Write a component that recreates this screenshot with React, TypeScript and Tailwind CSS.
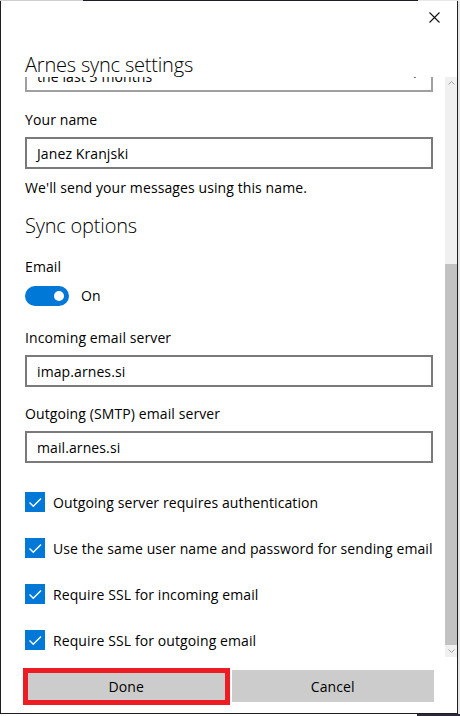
import React from "react";

const font = "font-['Open_Sans','Noto_Sans',sans-serif]";
const body = "text-[14px] tracking-[0.1px] text-black";

function Field({ label, value }: { label: string; value: string }) {
  return (
    <>
      <div className={`${body} leading-[22px]`}>{label}</div>
      <div className={`mt-[6px] h-8 border-2 border-[#7a7a7a] flex items-center pl-[10px] ${body}`}>
        {value}
      </div>
    </>
  );
}

function Check({ label, first }: { label: string; first?: boolean }) {
  return (
    <div className={`flex items-start h-5 ${first ? "mt-[29px]" : "mt-[26px]"}`}>
      <div className="w-5 h-5 bg-[#0078d7] flex items-center justify-center shrink-0">
        <svg width="20" height="20" viewBox="0 0 20 20" fill="none">
          <path d="M4.5 10.5 L8.3 14.3 L16 6.5" stroke="white" strokeWidth="1.4" />
        </svg>
      </div>
      <span className={`ml-2 leading-[22px] whitespace-nowrap ${body}`}>{label}</span>
    </div>
  );
}

export default function App() {
  return (
    <div className={`w-[460px] h-[716px] overflow-hidden bg-[#e8e8e8] flex flex-col ${font}`}>
      {/* strip of desktop above the window */}
      <div className="h-px flex shrink-0">
        <div className="w-[83px] bg-[#cfcfcf]" />
        <div className="w-[335px] bg-[#1c1c28]" />
        <div className="flex-1 bg-[#e8e8e8]" />
      </div>

      <div className="flex shrink-0">
        {/* Dialog window */}
        <div className="w-[458px] h-[713px] bg-white border-l border-r border-b border-[#1f1f1f] flex flex-col">
          {/* Close */}
          <div className="h-8 flex items-center justify-end pr-[17px] shrink-0">
            <svg width="11" height="11" viewBox="0 0 11 11" fill="none">
              <path d="M0.5 0.5 L10.5 10.5 M10.5 0.5 L0.5 10.5" stroke="#111" strokeWidth="1.1" />
            </svg>
          </div>

          {/* Title */}
          <div className="pt-[18px] h-[44px] pl-6 shrink-0">
            <h1 className="text-[20px] leading-[27px] tracking-[-0.2px] font-light text-black">Arnes sync settings</h1>
          </div>

          {/* Scrolled body */}
          <div className="flex h-[580px] shrink-0">
            <div className="flex-1 overflow-hidden pl-6 pr-3">
              <div className="-mt-[17px]">
                <div className={`h-8 border-2 border-[#a0a0a0] flex items-center justify-between pl-[10px] pr-3 ${body}`}>
                  <span>the last 3 months</span>
                  <svg width="8" height="5" viewBox="0 0 8 5" fill="none">
                    <path d="M0.5 0.5 L4 4 L7.5 0.5" stroke="#777" strokeWidth="1" />
                  </svg>
                </div>

                <div className="mt-[17px]">
                  <Field label="Your name" value="Janez Kranjski" />
                </div>
                <div className={`mt-2 leading-[22px] ${body}`}>We'll send your messages using this name.</div>

                <h2 className="mt-[13px] text-[20px] leading-7 tracking-[-0.2px] font-light text-black">Sync options</h2>

                <div className={`mt-4 leading-[22px] ${body}`}>Email</div>
                <div className="mt-2 flex items-center">
                  <div className="w-11 h-5 rounded-full bg-[#0078d7] flex items-center justify-end pr-[5px]">
                    <div className="w-[10px] h-[10px] rounded-full bg-white" />
                  </div>
                  <span className={`ml-3 leading-5 ${body}`}>On</span>
                </div>

                <div className="mt-[21px]">
                  <Field label="Incoming email server" value="imap.arnes.si" />
                </div>
                <div className="mt-4">
                  <Field label="Outgoing (SMTP) email server" value="mail.arnes.si" />
                </div>

                <Check first label="Outgoing server requires authentication" />
                <Check label="Use the same user name and password for sending email" />
                <Check label="Require SSL for incoming email" />
                <Check label="Require SSL for outgoing email" />
              </div>
            </div>

            {/* Scrollbar */}
            <div className="w-3 bg-[#f0f0f0] flex flex-col shrink-0">
              <div className="h-3 flex items-center justify-center">
                <svg width="7" height="4" viewBox="0 0 7 4" fill="none">
                  <path d="M0.5 3.5 L3.5 0.5 L6.5 3.5" stroke="#a0a0a0" strokeWidth="1" />
                </svg>
              </div>
              <div className="h-[175px]" />
              <div className="flex-1 bg-[#c2c2c2]" />
              <div className="h-3 flex items-center justify-center">
                <svg width="7" height="4" viewBox="0 0 7 4" fill="none">
                  <path d="M0.5 0.5 L3.5 3.5 L6.5 0.5" stroke="#a0a0a0" strokeWidth="1" />
                </svg>
              </div>
            </div>
          </div>

          {/* Footer */}
          <div className="flex gap-1 pl-6 pr-[23px] pt-[13px]">
            <div className="relative flex-1">
              <button className={`w-full h-8 bg-[#cccccc] ${body}`}>Done</button>
              <div className="absolute -left-[2px] -right-[2px] -top-[2px] -bottom-[3px] border-[5px] border-[#ed1c24] pointer-events-none" />
            </div>
            <button className={`flex-1 h-8 bg-[#cccccc] ${body}`}>Cancel</button>
          </div>
        </div>
        <div className="flex-1 bg-[#e6e6e6]" />
      </div>

      <div className="h-[2px] flex shrink-0">
        <div className="w-[417px] bg-white" />
        <div className="flex-1 bg-[#2a2a38]" />
      </div>
    </div>
  );
}
